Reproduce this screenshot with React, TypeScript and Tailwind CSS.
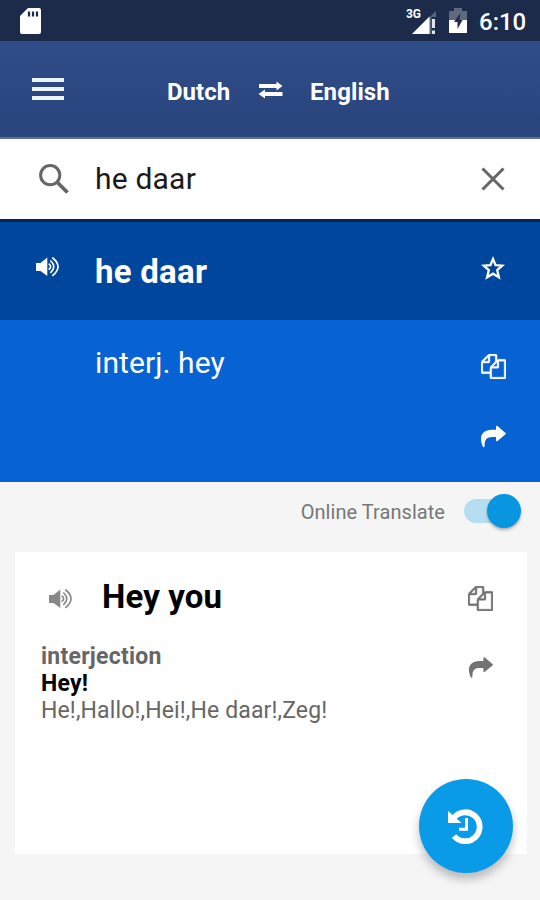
import { useState } from "react";

type IconProps = { className?: string };

function SpeakerIcon({ className }: IconProps) {
  return (
    <svg viewBox="0 0 24 22" className={className} fill="none" stroke="currentColor" strokeWidth="1.7" strokeLinecap="round">
      <path d="M0 7h4.500l6.800-5.500v18.500L4.500 15H0z" fill="currentColor" stroke="none" />
      <path d="M13.200 8.200q2.800 2.400 0 5" />
      <path d="M14.800 5q6 5.700 0 11.400" />
      <path d="M16.800 2q10.400 8.700 0 17.400" />
    </svg>
  );
}

function FilesIcon({ className }: IconProps) {
  return (
    <svg viewBox="0 0 1792 1792" className={className} fill="currentColor" stroke="currentColor" strokeWidth="30">
      <path d="M1696 384q40 0 68 28t28 68v1216q0 40-28 68t-68 28h-960q-40 0-68-28t-28-68v-288h-544q-40 0-68-28t-28-68v-672q0-40 20-88t48-76l408-408q28-28 76-48t88-20h416q40 0 68 28t28 68v328q68-40 128-40h416zm-544 213l-299 299h299v-299zm-640-384l-299 299h299v-299zm196 647l316-316v-416h-384v416q0 40-28 68t-68 28h-416v640h512v-256q0-40 20-88t48-76zm956 804v-1152h-384v416q0 40-28 68t-68 28h-416v640h896z" />
    </svg>
  );
}

function ShareIcon({ className }: IconProps) {
  return (
    <svg viewBox="0 0 26 23" className={className} fill="currentColor">
      <path d="M16 1.500q.3-1.300 1.500-.4l8 6.800q.8.700 0 1.400l-8 6.600q-1.200.9-1.500-.6V12h-4C6.500 12 4.300 15 4.600 21.500q-.5 1.400-1.600.2C-1.500 12.500 1.500 4.800 12 4.800h4z" />
    </svg>
  );
}

function StatusBar() {
  return (
    <div className="flex h-[41px] items-center bg-[#1c2b4a] pl-5 pr-[13px] text-white">
      <svg viewBox="0 0 21 26" className="h-[26px] w-[21px]">
        <path d="M8 0h11q2 0 2 2v22q0 2-2 2H2q-2 0-2-2V8z" fill="#fff" />
        <path d="M9 3.500v5M13 3.500v5M17 3.500v5" stroke="#1c2b4a" strokeWidth="2.200" />
      </svg>
      <div className="ml-auto flex items-center">
        <span className="-mr-[9px] -mt-[13px] text-[12px] leading-none font-bold">3G</span>
        <svg viewBox="0 0 24 24" className="mt-[2px] h-6 w-6">
          <path d="M0 24L24 1v6h-4.500v17z" fill="#5a657d" />
          <path d="M0 24L17.500 6.500V24z" fill="#fff" />
          <path d="M21.500 9v9M21.500 20.500V24" stroke="#dfe3ec" strokeWidth="3" />
        </svg>
        <svg viewBox="0 0 18 25" className="ml-[13px] h-[25px] w-[18px]">
          <path d="M5 0h8v3h5v10H0V3h5z" fill="#60697d" />
          <path d="M0 12h18v13H0z" fill="#fff" />
          <path d="M11.500 5l-6.500 9H8.500v7l5-9h-3z" fill="#1c2b4a" />
        </svg>
        <span className="ml-[12px] mt-[3px] w-[48px] text-[24px] leading-none font-medium whitespace-nowrap">6:10</span>
      </div>
    </div>
  );
}

function Header() {
  return (
    <header className="flex h-[98px] items-center border-b-2 border-[#60718f] bg-linear-to-b from-[#2f4d89] to-[#29447c] pl-8 text-white">
      <button className="-mt-px flex w-8 flex-col gap-[5px]">
        <span className="h-1 w-8 bg-[#eef2fc]" />
        <span className="h-1 w-8 bg-[#eef2fc]" />
        <span className="h-1 w-8 bg-[#eef2fc]" />
      </button>
      <span className="ml-[103px] mt-[5px] w-[91px] text-[24px] font-bold">Dutch</span>
      <svg viewBox="0 0 25 18" className="mt-px h-[18px] w-[25px]" fill="currentColor">
        <path d="M1 3h17.500V.5L24.500 5l-6 4.500V7H1z" />
        <path d="M24.500 11v4H7v2.500L.5 13 7 8.500V11z" />
      </svg>
      <span className="ml-[27px] mt-[5px] text-[24px] font-bold tracking-[0.1px]">English</span>
    </header>
  );
}

function SearchBar({ value, onChange }: { value: string; onChange: (v: string) => void }) {
  return (
    <div className="flex h-[83px] items-center border-b-[3px] border-[#00265f] bg-white pl-[39px] pr-[35px]">
      <svg viewBox="0 0 30 30" className="h-[30px] w-[30px]" fill="none" stroke="#666">
        <circle cx="11.200" cy="11.200" r="9.600" strokeWidth="3" />
        <path d="M18 18l10.500 10.500" strokeWidth="3.800" />
      </svg>
      <input
        value={value}
        onChange={(e) => onChange(e.target.value)}
        className="ml-[26px] -mt-[2px] w-[300px] text-[30px] tracking-[0.2px] text-[#1a1a1a] outline-none"
      />
      <button className="ml-auto" onClick={() => onChange("")}>
        <svg viewBox="0 0 24 24" className="h-6 w-6" stroke="#666" strokeWidth="3">
          <path d="M1.500 1.500l21 21M22.500 1.500l-21 21" />
        </svg>
      </button>
    </div>
  );
}

export default function App() {
  const [query, setQuery] = useState("he daar");
  const [online, setOnline] = useState(true);

  return (
    <div className="relative h-[900px] w-[540px] overflow-hidden bg-[#f5f5f5] font-['Roboto',sans-serif]">
      <StatusBar />
      <Header />
      <SearchBar value={query} onChange={setQuery} />

      {/* Source word */}
      <div className="flex h-[98px] items-center bg-[#00469c] pl-9 pr-[35px] text-white">
        <SpeakerIcon className="mb-2 h-[22px] w-6" />
        <h1 className="ml-[35px] mt-[2px] text-[33px] font-bold tracking-[0.25px]">he daar</h1>
        <svg viewBox="0 0 24 24" className="ml-auto mb-[7px] h-6 w-6" fill="none" stroke="currentColor" strokeWidth="2.300">
          <path d="M12 3l2.600 6.200 6.600.5-5 4.400 1.700 7.200L12 17.700l-5.900 3.600 1.700-7.200-5-4.400 6.600-.5z" />
        </svg>
      </div>

      {/* Dictionary result */}
      <div className="flex h-[162px] justify-between bg-[#0763d3] pl-[95px] pr-[34px] text-white">
        <p className="mt-[23px] text-[30px] leading-[40px] tracking-[0.1px]">interj. hey</p>
        <div className="flex flex-col items-center pt-[34px]">
          <FilesIcon className="h-[25px] w-[25px]" />
          <ShareIcon className="mt-[46px] h-[23px] w-[26px]" />
        </div>
      </div>

      <div className="flex h-[70px] items-start justify-end pr-[19px] pt-[11px]">
        <span className="mr-[18px] mt-[5px] text-[20px] leading-[28px] tracking-[0.05px] text-[#777]">Online Translate</span>
        <button onClick={() => setOnline(!online)} className="flex h-[35px] w-[58px] items-center pl-px">
          <span className={`flex h-6 w-[49px] items-center rounded-full ${online ? "justify-end bg-[#b5dff0]" : "bg-gray-300"}`}>
            <span className={`h-[34px] w-[34px] shrink-0 rounded-full shadow-[0_2px_3px_rgba(0,0,0,0.3)] ${online ? "-mr-[8px] bg-[#0896e0]" : "bg-white"}`} />
          </span>
        </button>
      </div>

      {/* Online translation card */}
      <div className="ml-[15px] flex h-[302px] w-[512px] justify-between bg-white pl-[26px] pr-[34px]">
        <div>
          <div className="mt-[22px] flex h-[46px] items-center">
            <SpeakerIcon className="ml-2 mt-1 h-[22px] w-6 text-[#888]" />
            <h2 className="ml-[29px] text-[33px] font-bold tracking-[0.15px] text-black">Hey you</h2>
          </div>
          <div className="mt-[23px] text-[23px] leading-[27px]">
            <p className="font-bold tracking-[0.25px] text-[#666]">interjection</p>
            <p className="font-bold tracking-[0.2px] text-black">Hey!</p>
            <p className="tracking-[0.13px] text-[#666]">He!,Hallo!,Hei!,He daar!,Zeg!</p>
          </div>
        </div>
        <div className="flex flex-col items-center pt-[34px] text-[#737373]">
          <FilesIcon className="h-[25px] w-[25px]" />
          <ShareIcon className="mt-[45px] h-[23px] w-[25px]" />
        </div>
      </div>

      {/* History button */}
      <button className="absolute left-[419px] top-[779px] flex h-[94px] w-[94px] items-center justify-center rounded-full bg-[#0a9be8] shadow-[0_6px_10px_rgba(0,0,0,0.25)]">
        <svg viewBox="0 0 36 36" className="h-9 w-9" fill="none" stroke="#fff">
          <path d="M6 9.500A14.500 14.500 0 1 1 6 28" strokeWidth="5.800" />
          <path d="M-1 2l14.500 13H-1z" fill="#fff" stroke="none" />
          <path d="M18.500 10v11.200H11" strokeWidth="3" />
        </svg>
      </button>
    </div>
  );
}
